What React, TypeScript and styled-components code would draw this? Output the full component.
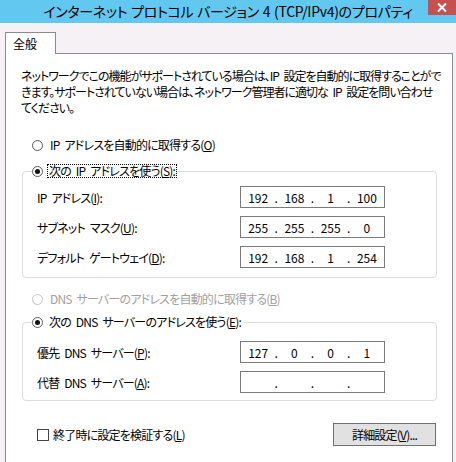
import React from "react";
import styled, { createGlobalStyle, css } from "styled-components";

const GlobalStyle = createGlobalStyle`
  html, body {
    margin: 0;
    padding: 0;
    background: #f5f1f5;
  }
  body {
    font-family: "Noto Sans CJK JP", "Noto Sans", sans-serif;
    font-size: 12px;
    color: #000;
  }
`;

const Window = styled.div`
  width: 456px;
  height: 462px;
  overflow: hidden;
  background: #f5f1f5;
`;

const TitleBar = styled.div`
  display: grid;
  grid-template-columns: 28px 1fr 28px;
  height: 23px;
  background: #63c8ef;
`;

const Title = styled.div`
  grid-column: 2;
  text-align: center;
  font-size: 14px;
  line-height: 23px;
  letter-spacing: -0.3px;
  word-spacing: 1px;
  font-feature-settings: "palt";
  white-space: nowrap;
`;

const CloseButton = styled.div`
  grid-column: 3;
  height: 15px;
  background: #c75050;
  display: flex;
  align-items: center;
  justify-content: center;
`;

const Body = styled.div`
  padding: 9px 3px 0 5px;
`;

const TabStrip = styled.div`
  display: flex;
`;

const Tab = styled.div`
  position: relative;
  z-index: 1;
  width: 51px;
  height: 22px;
  margin-bottom: -1px;
  padding-left: 7px;
  box-sizing: border-box;
  border: 1px solid #898c95;
  border-bottom: none;
  background: #fff;
  line-height: 22px;
`;

const Panel = styled.div`
  border: 1px solid #898c95;
  border-bottom: none;
  background: #fff;
  padding: 14px 16px 0 15px;
  height: 420px;
  letter-spacing: -0.8px;
  word-spacing: 3px;
  font-feature-settings: "palt";
`;

const Intro = styled.p`
  margin: 0;
  line-height: 16px;
  letter-spacing: -1px;
  white-space: nowrap;
`;

const OptionRow = styled.div<{ $top: number; $disabled?: boolean }>`
  display: flex;
  align-items: center;
  gap: 5px;
  margin-top: ${(p) => p.$top}px;
  padding-left: 11px;
  height: 16px;
  color: ${(p) => (p.$disabled ? "#a0a0a0" : "#000")};
`;

const Radio = styled.span<{ $checked?: boolean; $disabled?: boolean }>`
  width: 11px;
  height: 11px;
  box-sizing: border-box;
  border-radius: 50%;
  border: 1px solid ${(p) => (p.$disabled ? "#c4c4c4" : "#5a5a5a")};
  background: #fff;
  display: flex;
  align-items: center;
  justify-content: center;
  flex: none;
  ${(p) =>
    p.$checked &&
    css`
      &::after {
        content: "";
        width: 5px;
        height: 5px;
        border-radius: 50%;
        background: #111;
      }
    `}
`;

const Check = styled.span`
  width: 12px;
  height: 12px;
  box-sizing: border-box;
  border: 1px solid #444;
  background: #fff;
  flex: none;
`;

const OptionText = styled.span<{ $focused?: boolean }>`
  padding: 0 1px;
  line-height: 12px;
  border: 1px dotted ${(p) => (p.$focused ? "#000" : "transparent")};
`;

const GroupBox = styled.fieldset<{ $top: number; $pad: number; $bottom: number }>`
  margin: ${(p) => p.$top}px -1px 0 1px;
  padding: ${(p) => p.$pad}px 0 ${(p) => p.$bottom}px 0;
  border: 1px solid #dcdcdc;
  border-radius: 4px;
  display: grid;
  grid-template-columns: 217px 145px;
  row-gap: 8px;
  align-items: center;
`;

const Legend = styled.legend`
  margin-left: 9px;
  padding: 0 1px 0 0;
  display: flex;
  align-items: center;
  gap: 4px;
  height: 16px;
`;

const FieldLabel = styled.label`
  padding-left: 14px;
  white-space: nowrap;
`;

const IpBox = styled.div`
  height: 22px;
  box-sizing: border-box;
  border: 1px solid #7a7a7a;
  background: #fff;
  display: grid;
  grid-template-columns: 1fr 4px 1fr 4px 1fr 4px 1fr;
  align-items: center;
  padding: 0 1px;
  letter-spacing: 0;
`;

const Octet = styled.span`
  text-align: center;
`;

const Dot = styled.span`
  text-align: center;
`;

const Footer = styled.div`
  display: flex;
  align-items: center;
  justify-content: space-between;
  margin-top: 22px;
`;

const CheckRow = styled.div`
  display: flex;
  align-items: center;
  gap: 4px;
  padding-left: 16px;
`;

const Button = styled.div`
  width: 103px;
  height: 23px;
  box-sizing: border-box;
  border: 1px solid #707070;
  background: #e1e1e1;
  display: flex;
  align-items: center;
  justify-content: center;
`;

function IpField({ value }: { value: string[] }) {
  return (
    <IpBox>
      <Octet>{value[0]}</Octet>
      <Dot>.</Dot>
      <Octet>{value[1]}</Octet>
      <Dot>.</Dot>
      <Octet>{value[2]}</Octet>
      <Dot>.</Dot>
      <Octet>{value[3]}</Octet>
    </IpBox>
  );
}

export default function App() {
  return (
    <Window>
      <GlobalStyle />
      <TitleBar>
        <Title>インターネット プロトコル バージョン 4 (TCP/IPv4)のプロパティ</Title>
        <CloseButton>
          <svg width="10" height="9" viewBox="0 0 10 9">
            <path d="M1 0.5 L9 8.5 M9 0.5 L1 8.5" stroke="#fff" strokeWidth="2" />
          </svg>
        </CloseButton>
      </TitleBar>
      <Body>
        <TabStrip>
          <Tab>全般</Tab>
        </TabStrip>
        <Panel>
          <Intro>
            ネットワークでこの機能がサポートされている場合は、IP 設定を自動的に取得することがで
            <br />
            きます。サポートされていない場合は、ネットワーク管理者に適切な IP 設定を問い合わせ
            <br />
            てください。
          </Intro>

          <OptionRow $top={21}>
            <Radio />
            <OptionText>
              IP アドレスを自動的に取得する(<u>O</u>)
            </OptionText>
          </OptionRow>

          <GroupBox $top={10} $pad={7} $bottom={9}>
            <Legend>
              <Radio $checked />
              <OptionText $focused>
                次の IP アドレスを使う(<u>S</u>):
              </OptionText>
            </Legend>
            <FieldLabel>
              IP アドレス(<u>I</u>):
            </FieldLabel>
            <IpField value={["192", "168", "1", "100"]} />
            <FieldLabel>
              サブネット マスク(<u>U</u>):
            </FieldLabel>
            <IpField value={["255", "255", "255", "0"]} />
            <FieldLabel>
              デフォルト ゲートウェイ(<u>D</u>):
            </FieldLabel>
            <IpField value={["192", "168", "1", "254"]} />
          </GroupBox>

          <OptionRow $top={13} $disabled>
            <Radio $disabled />
            <OptionText>
              DNS サーバーのアドレスを自動的に取得する(<u>B</u>)
            </OptionText>
          </OptionRow>

          <GroupBox $top={7} $pad={11} $bottom={7}>
            <Legend>
              <Radio $checked />
              <OptionText>
                次の DNS サーバーのアドレスを使う(<u>E</u>):
              </OptionText>
            </Legend>
            <FieldLabel>
              優先 DNS サーバー(<u>P</u>):
            </FieldLabel>
            <IpField value={["127", "0", "0", "1"]} />
            <FieldLabel>
              代替 DNS サーバー(<u>A</u>):
            </FieldLabel>
            <IpField value={["", "", "", ""]} />
          </GroupBox>

          <Footer>
            <CheckRow>
              <Check />
              <span>
                終了時に設定を検証する(<u>L</u>)
              </span>
            </CheckRow>
            <Button>
              詳細設定(<u>V</u>)...
            </Button>
          </Footer>
        </Panel>
      </Body>
    </Window>
  );
}
